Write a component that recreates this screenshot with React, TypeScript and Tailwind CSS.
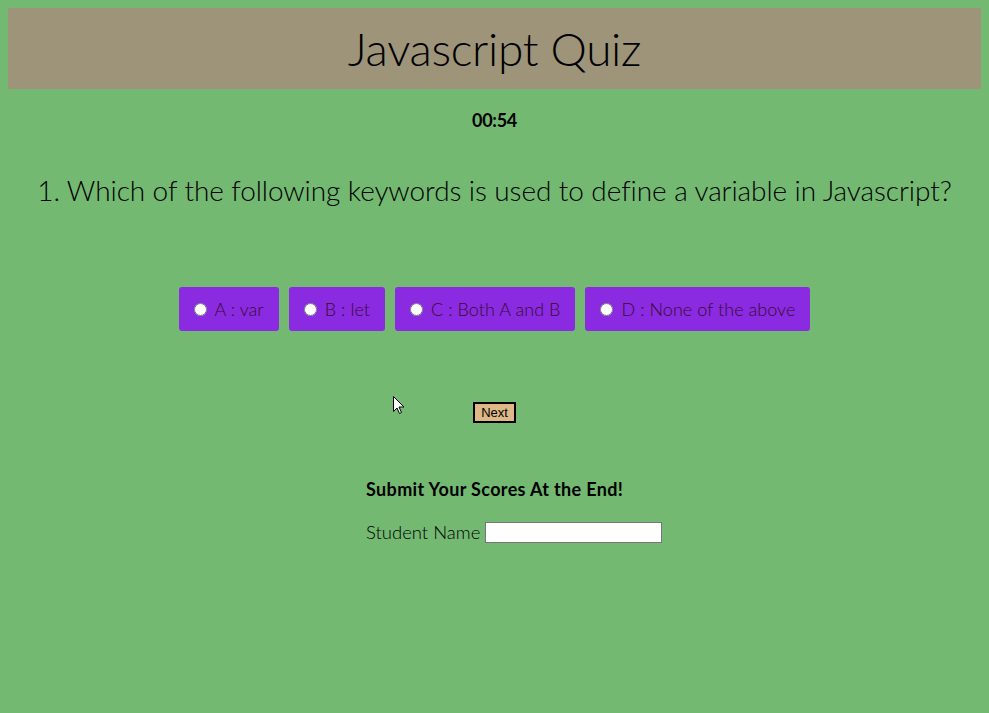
import React from "react";

const options = ["A : var", "B : let", "C : Both A and B", "D : None of the above"];

export default function App() {
  return (
    <div className="relative min-h-screen bg-[#73b972] p-2 font-['Lato',sans-serif] text-black">
      {/* header */}
      <div className="flex h-[81px] items-center justify-center bg-[#9e947a]">
        <h1 className="text-[46px] font-light tracking-[-0.3px]">Javascript Quiz</h1>
      </div>

      <div className="mt-[20px] text-center text-[18px] font-bold leading-[22px] tracking-[-0.3px]">00:54</div>

      <p className="mt-[41px] text-center text-[28px] font-light leading-[36px] tracking-[-0.08px]">
        1. Which of the following keywords is used to define a variable in Javascript?
      </p>

      <div className="mt-[79px] flex justify-center gap-[10px]">
        {options.map((o) => (
          <label
            key={o}
            className="flex h-[44px] items-center rounded-[3px] bg-[#8a2be2] pl-[15px] pr-[15px] text-[18px] font-light tracking-[0.05px] text-[#3a0a30]"
          >
            <input type="radio" name="q" className="mr-[8px] h-[13px] w-[13px] accent-white" />
            {o}
          </label>
        ))}
      </div>

      <div className="mt-[71px] flex justify-center">
        <button className="h-[21px] w-[43px] border-2 border-black bg-[#deb887] font-['Liberation_Sans',sans-serif] text-[13px] leading-none">
          Next
        </button>
      </div>

      <div className="mt-[55px] flex justify-center pl-[40px]">
        <div className="w-[297px]">
          <h3 className="text-[18px] font-bold leading-[22px] tracking-[0.35px]">Submit Your Scores At the End!</h3>
          <div className="mt-[19px] flex items-center gap-[5px]">
            <span className="text-[18.5px] font-light">Student Name</span>
            <input type="text" className="h-[21px] w-[177px] border border-[#767676] bg-white" />
          </div>
        </div>
      </div>

      {/* mouse cursor */}
      <svg className="absolute left-[393px] top-[396px]" width="12" height="19" viewBox="0 0 12 19">
        <path d="M0.5 0.5 L0.5 15.5 L4 12 L6.5 17.5 L8.5 16.5 L6 11 L11 11 Z" fill="white" stroke="black" strokeWidth="1" />
      </svg>
    </div>
  );
}
